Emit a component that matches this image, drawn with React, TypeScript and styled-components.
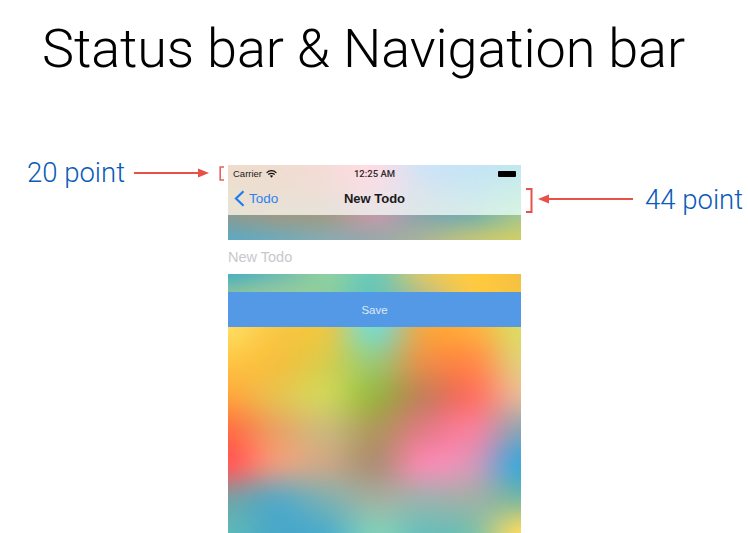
import React from 'react'
import styled, { createGlobalStyle } from 'styled-components'

const PHONE_WIDTH = 293
const STEP = 4
const PAD = 12

const GlobalStyle = createGlobalStyle`
    html, body {
        margin: 0;
        padding: 0;
        background: #fff;
    }
    body {
        width: 748px;
        height: 533px;
        overflow: hidden;
        font-family: "Liberation Sans", Arial, sans-serif;
    }
`

const barColors = [
    ['#efdccc', '#f0dcce', '#f5dcd8', '#fcdce4', '#cfe3f6', '#c5e4f5', '#c0e8ee'],
    ['#ece0d0', '#ecdfd2', '#efdfd8', '#f3e0e6', '#d9e4ee', '#cde8f0', '#cdeee8'],
    ['#e8e2d4', '#e7e2d8', '#e6e2da', '#e8e4e6', '#dce8e8', '#d6ece8', '#d6f3e2'],
]

const topBandColors = [
    ['#8a9a92', '#9a9a88', '#a09c88', '#c09aa8', '#8aa6ac', '#7ab0a8', '#a4c68c'],
    ['#5ea9c0', '#70aab8', '#88aab0', '#9aa8aa', '#a8b498', '#c0c47a', '#d0ce66'],
]

const midBandColors = [
    ['#4cb0c0', '#6ebcb0', '#8dcfa0', '#70c8b4', '#d8c86a', '#ffca40', '#f5c040'],
    ['#80c0a0', '#90c8a0', '#8ccd9f', '#6bc5b5', '#c0c080', '#fac945', '#f5c242'],
]

const lowerColors = [
    ['#ffdc60', '#f8c845', '#e8c84a', '#7ed8c8', '#f0aa45', '#fdb03f', '#dcdc62'],
    ['#ffc545', '#f5c03f', '#d6cc4e', '#9cc777', '#e8924a', '#ff8c48', '#e2cf78'],
    ['#ffa53e', '#e8c050', '#cfd35a', '#9eb446', '#c8805a', '#fb7462', '#e4b896'],
    ['#ff7045', '#eaa264', '#ccb878', '#b0985e', '#e07c84', '#f2829c', '#8da6b4'],
    ['#ff5c5a', '#e69c80', '#c8a888', '#b09078', '#f08cae', '#d098b8', '#42a8d6'],
    ['#7aa0a2', '#60a8c0', '#80b0b0', '#a0b0a0', '#a0b0ae', '#a0b0a8', '#7ab8a0'],
    ['#5cb8b8', '#4aa8c8', '#50aec8', '#80ceb8', '#6cbfb8', '#80c0a8', '#fada60'],
]

const toRgb = (hex: string) => [1, 3, 5].map(i => parseInt(hex.slice(i, i + 2), 16))

const catmull = (a: number, b: number, c: number, d: number, t: number) =>
    0.5 * (2 * b + (c - a) * t + (2 * a - 5 * b + 4 * c - d) * t * t + (3 * b - a - 3 * c + d) * t * t * t)

const spline = (values: number[], pos: number) => {
    const last = values.length - 1
    const i = Math.min(Math.floor(pos), last - 1)
    const at = (n: number) => values[Math.max(0, Math.min(last, n))]
    return catmull(at(i - 1), at(i), at(i + 1), at(i + 2), pos - i)
}

// colour of the wallpaper photo at a point, from a coarse grid of samples
const sample = (grid: number[][][], u: number, v: number) => {
    const across = grid.map(row => [0, 1, 2].map(ch => spline(row.map(px => px[ch]), u * (row.length - 1))))
    const rgb = [0, 1, 2].map(ch => Math.round(Math.max(0, Math.min(255, spline(across.map(px => px[ch]), v * (grid.length - 1))))))
    return `rgb(${rgb.join(',')})`
}

const Wallpaper: React.FC<{ id: string; height: number; colors: string[][] }> = ({ id, height, colors }) => {
    const grid = colors.map(row => row.map(toRgb))
    const cells = []
    for (let y = -PAD; y < height + PAD; y += STEP) {
        for (let x = -PAD; x < PHONE_WIDTH + PAD; x += STEP) {
            const u = Math.max(0, Math.min(1, (x + STEP / 2) / PHONE_WIDTH))
            const v = Math.max(0, Math.min(1, (y + STEP / 2) / height))
            cells.push(<rect key={`${x}-${y}`} x={x} y={y} width={STEP + 0.5} height={STEP + 0.5} fill={sample(grid, u, v)} />)
        }
    }
    return (
        <Art width={PHONE_WIDTH} height={height} viewBox={`0 0 ${PHONE_WIDTH} ${height}`}>
            <filter id={id} filterUnits="userSpaceOnUse" x={-PAD} y={-PAD} width={PHONE_WIDTH + PAD * 2} height={height + PAD * 2}>
                <feGaussianBlur stdDeviation={2} />
            </filter>
            <g filter={`url(#${id})`}>{cells}</g>
        </Art>
    )
}

const App: React.FC = () => {
    return (
        <Page>
            <GlobalStyle />
            <Title>Status bar &amp; Navigation bar</Title>
            <Diagram>
                <LeftCallout>
                    <Label>20 point</Label>
                    <svg width="76" height="12" viewBox="0 0 76 12">
                        <path d="M0 6H64" stroke="#e8504a" strokeWidth="2" />
                        <path d="M64 1.5L75 6L64 10.5Z" fill="#e8504a" />
                    </svg>
                    <svg width="6" height="15" viewBox="0 0 6 15">
                        <path d="M5 1H1.2V14H5" fill="none" stroke="#e8605a" strokeWidth="1.6" />
                    </svg>
                </LeftCallout>
                <Phone>
                    <Bar>
                        <Wallpaper id="bar" height={50} colors={barColors} />
                        <StatusBar>
                            <Carrier>
                                Carrier
                                <svg width="11" height="8" viewBox="0 0 11 8">
                                    <path d="M0.6 2.8C3.4 0 7.6 0 10.4 2.8M2.3 4.5C4 2.9 7 2.9 8.7 4.5" fill="none" stroke="#111" strokeWidth="1.2" />
                                    <path d="M3.8 5.8C4.8 4.9 6.2 4.9 7.2 5.8L5.5 7.7Z" fill="#111" />
                                </svg>
                            </Carrier>
                            <Clock>12:25 AM</Clock>
                            <Battery />
                        </StatusBar>
                        <NavBar>
                            <BackLink>
                                <svg width="11" height="17" viewBox="0 0 11 17">
                                    <path d="M9.5 1.2L2 8.5L9.5 15.8" fill="none" stroke="#1f7cf0" strokeWidth="2.2" />
                                </svg>
                                Todo
                            </BackLink>
                            <NavTitle>New Todo</NavTitle>
                        </NavBar>
                    </Bar>
                    <Band $height={25}>
                        <Wallpaper id="top" height={25} colors={topBandColors} />
                    </Band>
                    <TodoField>New Todo</TodoField>
                    <Band $height={18}>
                        <Wallpaper id="mid" height={18} colors={midBandColors} />
                    </Band>
                    <SaveButton>Save</SaveButton>
                    <Band $height={206}>
                        <Wallpaper id="low" height={206} colors={lowerColors} />
                    </Band>
                </Phone>
                <RightCallout>
                    <svg width="7" height="25" viewBox="0 0 7 25">
                        <path d="M0 1H5.5V24H0" fill="none" stroke="#e8504a" strokeWidth="2" />
                    </svg>
                    <ArrowLeft width="95" height="12" viewBox="0 0 95 12">
                        <path d="M11 6H95" stroke="#e8504a" strokeWidth="2" />
                        <path d="M0 6L11 1.5V10.5Z" fill="#e8504a" />
                    </ArrowLeft>
                    <Label>44 point</Label>
                </RightCallout>
            </Diagram>
        </Page>
    )
}

const Page = styled.div`
    display: flex;
    flex-direction: column;
    width: 748px;
    height: 533px;
    overflow: hidden;
`
const Title = styled.h1`
    height: 165px;
    margin: 0;
    padding: 15px 0 0 42px;
    box-sizing: border-box;
    font-family: "Roboto", "Liberation Sans", sans-serif;
    font-size: 54px;
    font-weight: 300;
    line-height: 68px;
    letter-spacing: -0.12px;
    color: #000;
    white-space: nowrap;
`
const Diagram = styled.div`
    display: grid;
    grid-template-columns: 228px 293px 1fr;
    align-items: start;
`
const LeftCallout = styled.div`
    display: flex;
    align-items: center;
    justify-content: flex-end;
    gap: 9px;
    height: 16px;
    padding: 0 3px 0 0;
`
const RightCallout = styled.div`
    display: flex;
    align-items: center;
    gap: 5px;
    height: 25px;
    margin-top: 23px;
    padding-left: 5px;
`
const ArrowLeft = styled.svg`
    flex: none;
    margin-right: 7px;
    margin-top: -3px;
`
const Label = styled.span`
    margin-top: -1px;
    font-family: "Roboto", "Liberation Sans", sans-serif;
    font-size: 27.5px;
    font-weight: 300;
    line-height: 24px;
    color: #0b5bb8;
    white-space: nowrap;
`
const Phone = styled.div`
    display: flex;
    flex-direction: column;
    width: 293px;
`
const Art = styled.svg`
    position: absolute;
    top: 0;
    left: 0;
    display: block;
`
const Bar = styled.div`
    position: relative;
    height: 50px;
    overflow: hidden;
`
const Band = styled.div<{ $height: number }>`
    position: relative;
    height: ${p => p.$height}px;
    overflow: hidden;
`
const StatusBar = styled.div`
    position: relative;
    display: grid;
    grid-template-columns: 1fr auto 1fr;
    align-items: center;
    height: 17px;
    padding: 0 5px;
    font-size: 9.5px;
    color: #222;
`
const Carrier = styled.span`
    display: flex;
    align-items: center;
    gap: 4px;
`
const Clock = styled.span`
    font-family: "Roboto", "Liberation Sans", sans-serif;
    font-weight: 500;
    color: #2a2a2a;
`
const Battery = styled.span`
    justify-self: end;
    width: 18px;
    height: 6px;
    border-radius: 1px;
    background: #000;
    box-shadow: 1.5px 0 0 -1.5px #000;
`
const NavBar = styled.div`
    position: relative;
    display: flex;
    align-items: center;
    justify-content: center;
    height: 33px;
`
const BackLink = styled.span`
    position: absolute;
    left: 6px;
    top: 8px;
    display: flex;
    align-items: center;
    gap: 4px;
    font-size: 13.5px;
    color: #2a82f0;
`
const NavTitle = styled.span`
    font-size: 13px;
    font-weight: bold;
    color: #1a1a1a;
`
const TodoField = styled.div`
    height: 34px;
    font-size: 14.5px;
    line-height: 34px;
    background: #fff;
    color: #c8c8cc;
`
const SaveButton = styled.div`
    height: 35px;
    font-size: 11.5px;
    line-height: 36px;
    text-align: center;
    background: #5499e6;
    color: #dfe9f5;
`

export default App
